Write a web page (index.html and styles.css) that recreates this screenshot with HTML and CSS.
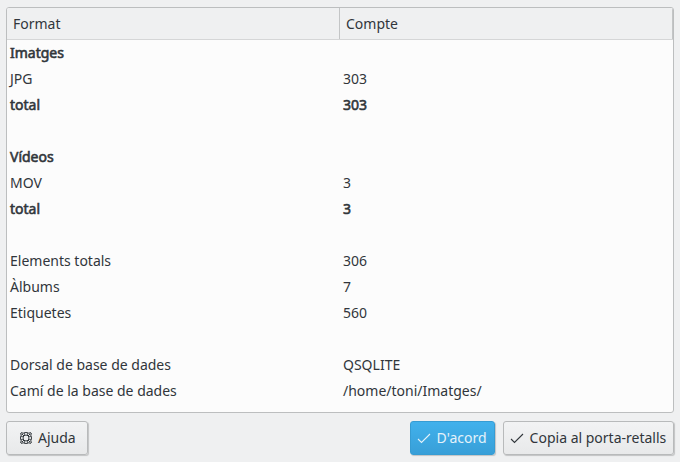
FILE: index.html
```html
<!DOCTYPE html>
<html lang="ca">
<head>
<meta charset="utf-8">
<title>Estadístiques</title>
<link rel="stylesheet" href="styles.css">
</head>
<body>
<main class="dialog">
  <section class="table">
    <div class="head"><span>Format</span><span>Compte</span></div>
    <div class="row bold"><span>Imatges</span></div>
    <div class="row"><span>JPG</span><span>303</span></div>
    <div class="row bold"><span>total</span><span>303</span></div>
    <div class="row"></div>
    <div class="row bold"><span>Vídeos</span></div>
    <div class="row"><span>MOV</span><span>3</span></div>
    <div class="row bold"><span>total</span><span>3</span></div>
    <div class="row"></div>
    <div class="row"><span>Elements totals</span><span>306</span></div>
    <div class="row"><span>Àlbums</span><span>7</span></div>
    <div class="row"><span>Etiquetes</span><span>560</span></div>
    <div class="row"></div>
    <div class="row"><span>Dorsal de base de dades</span><span>QSQLITE</span></div>
    <div class="row"><span>Camí de la base de dades</span><span>/home/toni/Imatges/</span></div>
  </section>
  <footer class="actions">
    <button class="btn help"><svg width="16" height="16" viewBox="0 0 16 16"><g fill="none" stroke="currentColor"><circle cx="8" cy="8" r="5.500"/><circle cx="8" cy="8" r="3"/><path d="M2.500 4.500v-1l1-1h1M11.500 2.500h1l1 1v1M13.500 11.500v1l-1 1h-1M4.500 13.500h-1l-1-1v-1"/><path d="M6.500 3v2.500M9.500 3v2.500M6.500 10.500v2.500M9.500 10.500v2.500M3 6.500h2.500M3 9.500h2.500M10.500 6.500h2.500M10.500 9.500h2.500" stroke-opacity=".7"/><path d="M3.500 3.500l2.500 2.500M12.500 3.500l-2.500 2.500M3.500 12.500l2.500-2.500M12.500 12.500l-2.500-2.500"/></g></svg><span>Ajuda</span></button>
    <button class="btn primary"><svg width="16" height="16" viewBox="0 0 16 16"><path d="M2 9l3.500 3.500L14 4" fill="none" stroke="currentColor" stroke-width="1.100"/></svg><span>D'acord</span></button>
    <button class="btn copy"><svg width="16" height="16" viewBox="0 0 16 16"><path d="M2 9l3.500 3.500L14 4" fill="none" stroke="currentColor" stroke-width="1.100"/></svg><span>Copia al porta-retalls</span></button>
  </footer>
</main>
</body>
</html>
```
FILE: styles.css
```css
* { box-sizing: border-box; }
body {
  margin: 0;
  background: #eff0f1;
  color: #31363b;
  font: 14px/26px "Noto Sans", sans-serif;
}
.dialog {
  height: 462px;
  padding: 7px 6px;
  display: flex;
  flex-direction: column;
  gap: 8px;
}
.table {
  height: 406px;
  border: 1px solid #bcbebf;
  border-radius: 3px;
  background: #fcfcfc;
  overflow: hidden;
}
.head, .row { display: grid; grid-template-columns: 333px 1fr; }
.head {
  height: 32px;
  line-height: 31px;
  background: #eff0f1;
  border-bottom: 1px solid #d5d6d7;
}
.head span { padding-left: 6px; border-right: 1px solid #c3c5c6; }
.row { height: 26px; }
.row span { padding-left: 3px; white-space: nowrap; }
.bold { -webkit-text-stroke: 0.6px #31363b; }
.actions { display: flex; gap: 8px; }
.btn {
  height: 34px;
  padding: 0 0 0 5px;
  display: flex;
  align-items: center;
  gap: 4.6px;
  border: 1px solid #b8babb;
  border-radius: 3px;
  background: linear-gradient(#f2f3f4, #e8e9ea);
  box-shadow: 1px 1px 1px #00000030;
  color: #31363b;
  font: 14px/20px "Noto Sans", sans-serif;
  white-space: nowrap;
}
.btn svg { flex: none; }
.help { width: 82px; padding-left: 11px; margin-right: auto; gap: 4px; }
.primary {
  width: 85px;
  border-color: #369cd3;
  background: linear-gradient(#41b1ec, #389fd8);
  color: #e4f2fa;
}
.copy { width: 171px; }
```
